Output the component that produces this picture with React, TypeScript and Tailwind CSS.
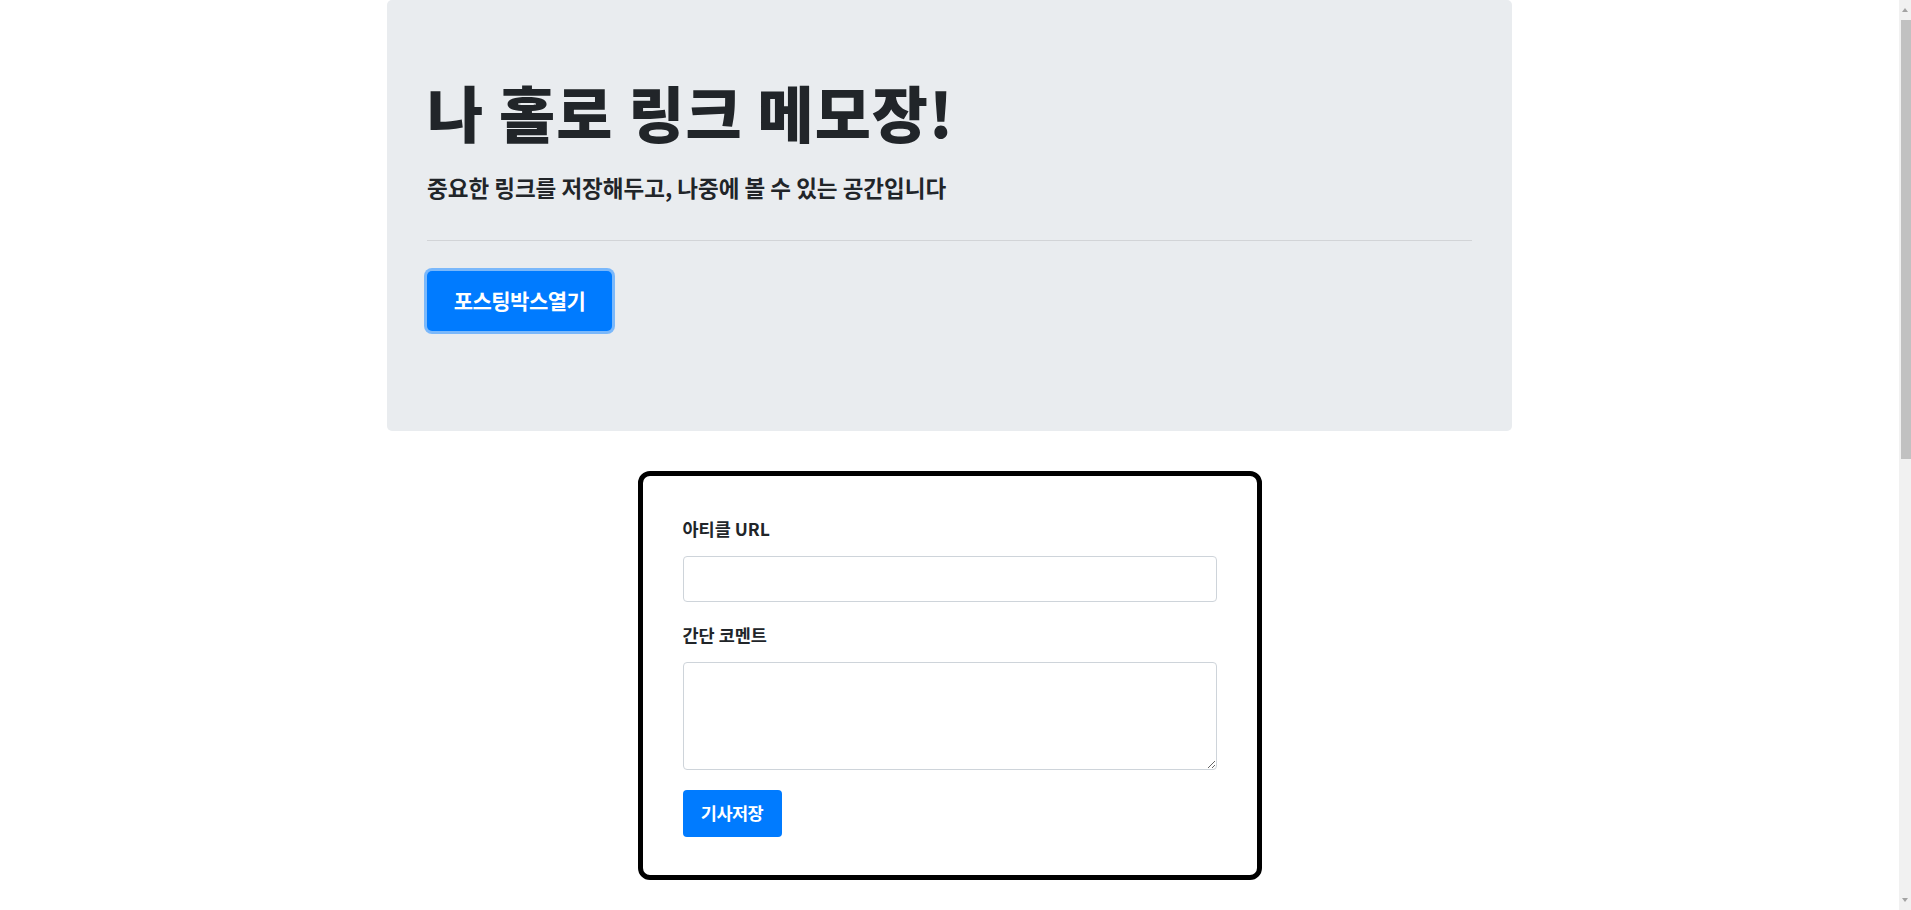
export default function App() {
    return (
        <div
            className="flex h-screen overflow-hidden bg-white text-[#212529]"
            style={{ fontFamily: '"Noto Sans CJK KR", "Noto Sans", sans-serif' }}
        >
            <div className="flex-1">
                {/* Jumbotron */}
                <div className="mx-auto w-[1125px] rounded-[5px] bg-[#e9ecef] px-[40px] pt-[75px] pb-[100px]">
                    <h1 className="text-[61px] font-black leading-[73px] tracking-[1px]">나 홀로 링크 메모장!</h1>
                    <p className="mt-[23px] text-[22.5px] font-bold leading-[33px]">
                        중요한 링크를 저장해두고, 나중에 볼 수 있는 공간입니다
                    </p>
                    <hr className="mt-[36px] border-t border-[#d2d4d7]" />
                    <button className="mt-[30px] h-[60px] w-[185px] rounded-[5px] bg-[#007bff] text-[21px] font-bold tracking-[-0.5px] text-white ring-[3px] ring-[#7ab8fb]">
                        포스팅박스열기
                    </button>
                </div>

                {/* Posting box */}
                <div className="mx-auto mt-[40px] w-[624px] rounded-[12px] border-[5px] border-black px-[40px] pt-[40px] pb-[38px]">
                    <label className="block text-[17.5px] font-bold leading-[25px]">아티클 URL</label>
                    <input className="mt-[15px] block h-[46px] w-full rounded-[4px] border border-[#ced4da] bg-white px-3 outline-none" />
                    <label className="mt-[20px] block text-[17.5px] font-bold leading-[25px]">간단 코멘트</label>
                    <textarea className="mt-[15px] block h-[108px] w-full rounded-[4px] border border-[#ced4da] bg-white px-3 py-2 outline-none" />
                    <button className="mt-[20px] h-[47px] w-[99px] rounded-[4px] bg-[#007bff] text-[17.5px] font-bold tracking-[-0.5px] text-white">
                        기사저장
                    </button>
                </div>
            </div>

            {/* Browser scrollbar */}
            <div className="flex w-[12px] flex-col bg-[#f1f1f1]">
                <div className="flex h-[20px] items-center justify-center">
                    <div className="h-0 w-0 border-x-[3px] border-b-[4px] border-x-transparent border-b-[#a3a3a3]" />
                </div>
                <div className="ml-[2px] h-[439px] bg-[#c1c1c1]" />
                <div className="flex-1" />
                <div className="flex h-[20px] items-center justify-center">
                    <div className="h-0 w-0 border-x-[3px] border-t-[4px] border-x-transparent border-t-[#a3a3a3]" />
                </div>
            </div>
        </div>
    );
}
